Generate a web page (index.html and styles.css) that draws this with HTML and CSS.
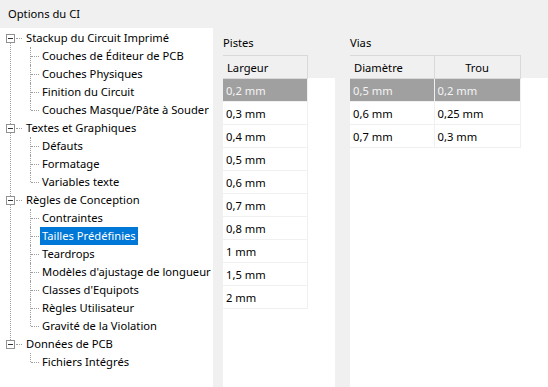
FILE: index.html
```html
<!DOCTYPE html>
<html lang="fr">
<head>
<meta charset="utf-8">
<title>Options du CI</title>
<link rel="stylesheet" href="styles.css">
</head>
<body>
<div class="title">Options du CI</div>
<div class="main">
  <div class="tree">
    <div class="node">
      <div class="row parent"><span class="box"></span><span class="conn"></span><span class="label">Stackup du Circuit Imprimé</span></div>
      <div class="children">
        <div class="row child"><span class="label">Couches de Éditeur de PCB</span></div>
        <div class="row child"><span class="label">Couches Physiques</span></div>
        <div class="row child"><span class="label">Finition du Circuit</span></div>
        <div class="row child"><span class="label">Couches Masque/Pâte à Souder</span></div>
      </div>
    </div>
    <div class="node">
      <div class="row parent"><span class="box"></span><span class="conn"></span><span class="label">Textes et Graphiques</span></div>
      <div class="children">
        <div class="row child"><span class="label">Défauts</span></div>
        <div class="row child"><span class="label">Formatage</span></div>
        <div class="row child"><span class="label">Variables texte</span></div>
      </div>
    </div>
    <div class="node">
      <div class="row parent"><span class="box"></span><span class="conn"></span><span class="label">Règles de Conception</span></div>
      <div class="children">
        <div class="row child"><span class="label">Contraintes</span></div>
        <div class="row child"><span class="label selected">Tailles Prédéfinies</span></div>
        <div class="row child"><span class="label">Teardrops</span></div>
        <div class="row child"><span class="label">Modèles d'ajustage de longueur</span></div>
        <div class="row child"><span class="label">Classes d'Equipots</span></div>
        <div class="row child"><span class="label">Règles Utilisateur</span></div>
        <div class="row child"><span class="label">Gravité de la Violation</span></div>
      </div>
    </div>
    <div class="node">
      <div class="row parent"><span class="box"></span><span class="conn"></span><span class="label">Données de PCB</span></div>
      <div class="children">
        <div class="row child"><span class="label">Fichiers Intégrés</span></div>
      </div>
    </div>
  </div>

  <div class="group pistes">
    <div class="group-title">Pistes</div>
    <div class="grid">
      <table>
        <thead><tr><th class="c1">Largeur</th></tr></thead>
        <tbody>
          <tr class="sel"><td>0,2 mm</td></tr>
          <tr><td>0,3 mm</td></tr>
          <tr><td>0,4 mm</td></tr>
          <tr><td>0,5 mm</td></tr>
          <tr><td>0,6 mm</td></tr>
          <tr><td>0,7 mm</td></tr>
          <tr><td>0,8 mm</td></tr>
          <tr><td>1 mm</td></tr>
          <tr><td>1,5 mm</td></tr>
          <tr><td>2 mm</td></tr>
        </tbody>
      </table>
    </div>
  </div>

  <div class="group vias">
    <div class="group-title">Vias</div>
    <div class="grid">
      <table>
        <thead><tr><th class="c1">Diamètre</th><th class="c2 center">Trou</th></tr></thead>
        <tbody>
          <tr class="sel"><td>0,5 mm</td><td>0,2 mm</td></tr>
          <tr><td>0,6 mm</td><td>0,25 mm</td></tr>
          <tr><td>0,7 mm</td><td>0,3 mm</td></tr>
        </tbody>
      </table>
    </div>
  </div>
</div>
</body>
</html>
```
FILE: styles.css
```css
* { box-sizing: border-box; }
html, body { margin: 0; padding: 0; }
body {
  width: 548px;
  height: 387px;
  overflow: hidden;
  background: #f0f0f0;
  color: #000;
  font-family: "Noto Sans", "Liberation Sans", sans-serif;
  font-size: 11.2px;
  display: flex;
  flex-direction: column;
}
.title {
  height: 28px;
  line-height: 28px;
  padding-left: 8px;
  flex: none;
}
.main {
  flex: 1;
  display: flex;
  min-height: 0;
}
.tree {
  width: 213px;
  background: #fff;
  padding-top: 1px;
  flex: none;
  overflow: hidden;
}
.node { position: relative; }
.node:not(:last-child)::before {
  content: "";
  position: absolute;
  left: 10px;
  top: 9px;
  bottom: -9px;
  border-left: 1px dotted #a0a0a0;
}
.row {
  height: 18px;
  display: flex;
  align-items: center;
  white-space: nowrap;
  position: relative;
}
.parent { padding-left: 6px; }
.box {
  width: 9px;
  height: 9px;
  border: 1px solid #919191;
  background: #fff;
  position: relative;
  z-index: 1;
  flex: none;
}
.box::after {
  content: "";
  position: absolute;
  left: 1px;
  right: 1px;
  top: 3px;
  height: 1px;
  background: #333;
}
.conn {
  width: 6px;
  margin: 0 2px 0 1px;
  border-top: 1px dotted #a0a0a0;
  flex: none;
}
.label { padding: 0 2px; line-height: 18px; }
.child { padding-left: 40px; }
.child::before {
  content: "";
  position: absolute;
  left: 30px;
  top: 0;
  bottom: 0;
  border-left: 1px dotted #a0a0a0;
}
.child:last-child::before { bottom: 9px; }
.child::after {
  content: "";
  position: absolute;
  left: 31px;
  top: 9px;
  width: 8px;
  border-top: 1px dotted #a0a0a0;
}
.selected {
  background: #0078d7;
  color: #fff;
}
.group {
  display: flex;
  flex-direction: column;
  flex: none;
}
.pistes { width: 112px; margin-left: 10px; }
.vias { flex: 1; margin-left: 15px; }
.group-title {
  height: 27px;
  line-height: 27px;
  padding-top: 1px;
  flex: none;
}
.grid {
  flex: 1;
  background: linear-gradient(#f0f0f0 0 23px, #fff 23px);
}
table {
  border-collapse: collapse;
  table-layout: fixed;
}
th {
  height: 23px;
  font-weight: normal;
  text-align: left;
  padding: 0 4px;
  background: #f0f0f0;
  border: 1px solid #d9d9d9;
  border-left: none;
}
.pistes th.c1 { width: 84px; }
.vias th.c1 { width: 84px; }
.vias th.c2 { width: 86px; }
th.center { text-align: center; }
td {
  height: 23px;
  padding: 0 3px;
  background: #fff;
  border-right: 1px solid #f0f0f0;
  border-bottom: 1px solid #f0f0f0;
  white-space: nowrap;
}
tr.sel td {
  background: #a0a0a0;
  color: #f4f4f4;
}
```
